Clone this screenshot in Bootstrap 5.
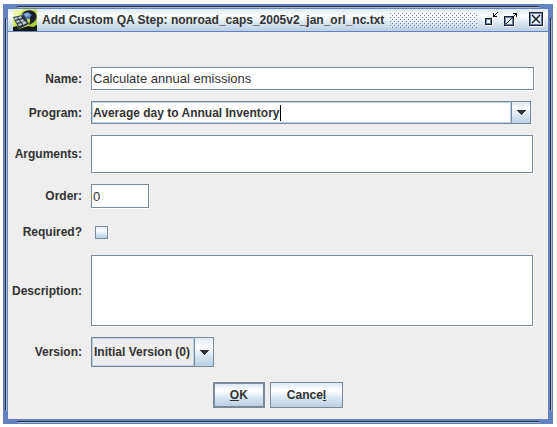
<!DOCTYPE html>
<html lang="en">
<head>
<meta charset="utf-8">
<meta name="viewport" content="width=device-width, initial-scale=1">
<title>Add Custom QA Step</title>
<link href="https://cdn.jsdelivr.net/npm/bootstrap@5.3.0/dist/css/bootstrap.min.css" rel="stylesheet">
<style>
:root{--edge:#7a8a99;--steel:#6382bf;--pale:#b8cfe5;--ink:#333;--sheen:linear-gradient(#dde8f3,#fff 30%,#dde8f3 60%,#b8cfe5)}
body{font:bold 12px/16px "Liberation Sans",Arial,sans-serif;color:var(--ink);background:#fff;padding:4px 4px 3px 3px}
.frame{
  padding:5px;
  background:
    linear-gradient(var(--ink),var(--ink)) 14px 2px/calc(100% - 28px) 1px no-repeat,
    linear-gradient(#a3b8d8,#a3b8d8) 15px 3px/calc(100% - 28px) 1px no-repeat,
    linear-gradient(var(--ink),var(--ink)) 14px calc(100% - 2px)/calc(100% - 28px) 1px no-repeat,
    linear-gradient(#a3b8d8,#a3b8d8) 15px calc(100% - 1px)/calc(100% - 28px) 1px no-repeat,
    linear-gradient(var(--ink),var(--ink)) 2px 14px/1px calc(100% - 28px) no-repeat,
    linear-gradient(#a3b8d8,#a3b8d8) 3px 15px/1px calc(100% - 28px) no-repeat,
    linear-gradient(var(--ink),var(--ink)) calc(100% - 2px) 14px/1px calc(100% - 28px) no-repeat,
    linear-gradient(#a3b8d8,#a3b8d8) calc(100% - 1px) 15px/1px calc(100% - 28px) no-repeat,
    var(--steel)}
.titlebar{height:23px;padding:0 4px 0 5px;border-bottom:1px solid var(--steel);background:var(--sheen)}
.titlebar h1{font-size:12px;line-height:22px;font-weight:bold;margin-left:5px}
.grip{height:16px;margin:0 7px 0 5px;background:url("data:image/svg+xml,%3Csvg xmlns='http://www.w3.org/2000/svg' width='4' height='4' shape-rendering='crispEdges'%3E%3Cpath fill='%23fff' d='M0 0h1v1H0zM2 2h1v1H2z'/%3E%3Cpath fill='%236382bf' d='M1 1h1v1H1zM3 3h1v1H3z'/%3E%3C/svg%3E")}
.tool{border:0;background:none;padding:0;line-height:0}
.tool-max{margin:0 11px 0 5px}
.panel{background:#eee;padding:35px 14px 11px 5px}
.fields{display:grid;grid-template-columns:69px minmax(0,1fr);column-gap:9px;row-gap:11px;align-items:center}
.fields label{text-align:right;white-space:nowrap;justify-self:end}
.box{display:block;font:13px/16px "Liberation Sans",Arial,sans-serif;color:var(--ink);background:#fff;border:1px solid var(--edge);border-radius:0;padding:0 1px;height:23px;width:100%;box-shadow:1px 1px #fff}
.box:focus,.entry input:focus{outline:0}
.args,.desc{resize:none;width:calc(100% - 1px)}
.args{height:38px}
.desc{height:71px}
.order{width:58px;height:24px}
.combo{height:23px;width:calc(100% - 3px);border:1px solid var(--edge);background:#fff}
.entry{border:1px solid var(--pale);min-width:0}
.entry input{font:inherit;color:inherit;border:0;padding:0;width:187px;min-width:0}
.caret{width:1px;height:16px;background:#000}
.drop{width:19px;padding:0;border:0;border-left:1px solid var(--edge);line-height:0;background:var(--sheen)}
.check-line{height:25px;padding:2px 0 0 4px}
.tick{appearance:none;width:13px;height:13px;margin:0;border:1px solid var(--edge);background:var(--sheen)}
.version{appearance:none;font:inherit;color:inherit;width:123px;height:30px;border:1px solid var(--edge);border-radius:0;padding:0 0 0 2px;
  background:
   url("data:image/svg+xml,%3Csvg xmlns='http://www.w3.org/2000/svg' width='10' height='5' shape-rendering='crispEdges'%3E%3Cpath fill='%23333' d='M0 0h10L5 5z'/%3E%3C/svg%3E") right 4px center no-repeat,
   linear-gradient(var(--edge),var(--edge)) right 18px top/1px 100% no-repeat,
   var(--sheen) right/18px 100% no-repeat,
   linear-gradient(#eee,#eee) 1px 1px/calc(100% - 21px) calc(100% - 2px) no-repeat,
   var(--pale)}
.actions{padding:15px 0 0 9px;gap:5px}
.push{font:inherit;color:inherit;height:26px;border:1px solid var(--edge);border-radius:0;padding:0 16px;background:var(--sheen)}
.push.main{border-width:2px;padding:0 15px}
</style>
</head>
<body>
<main class="frame">
  <header class="titlebar d-flex align-items-center">
    <svg class="flex-shrink-0" width="24" height="22" viewBox="0 0 24 22" aria-hidden="true">
      <path fill="#cfe566" d="M0 0h24v22H0z"/>
      <path fill="#eef5b0" d="M0 0h10L5 7 0 9z"/>
      <path fill="#a9cf3c" d="M15 13l9-8v12l-7 1z"/>
      <path fill="#141a10" d="M0 18l4-1 2 3 9-3 5 1 4-2v6H0z"/>
      <path fill="#1b2024" d="M9 5c3-5 12-5 14 0 2 5-2 9-7 11 1-3 2-5 0-7z"/>
      <path fill="#4f79b8" d="M9 5l6-2 4 3-3 4-5 1-3-3z"/>
      <path fill="#8fb1dc" d="M11 5l4-1 2 2-4 2z"/>
      <path fill="#2b343b" d="M0 8l11-2 5 9-10 5z"/>
      <path fill="#b9c7d4" d="M1 9l3-1 1 2-3 1zM5 8l3-1 1 2-3 1zM3 12l3-1 1 2-3 1zM7 11l3-1 1 2-3 1zM5 15l3-1 1 2-3 1zM9 13l3-1 2 2-4 2z"/>
    </svg>
    <h1 class="mb-0 text-nowrap" id="title">Add Custom QA Step: nonroad_caps_2005v2_jan_orl_nc.txt</h1>
    <div class="grip flex-grow-1"></div>
    <button class="tool" type="button" aria-label="Minimize"><svg width="14" height="16" shape-rendering="crispEdges"><path fill="#fff" d="M1 7h7v7H1z"/><path fill="#222" d="M0 6h7v7H0z"/><path fill="#6382bf" d="M1 7h5v5H1z"/><path fill="#fff" d="M2 8h3v3H2z"/><path fill="#111" d="M8 1h1v3h3v1H8zM9 3h1v1H9zM10 2h1v1h-1zM11 1h1v1h-1zM12 0h1v1h-1z"/></svg></button>
    <button class="tool tool-max" type="button" aria-label="Maximize"><svg width="14" height="16" shape-rendering="crispEdges"><path fill="#fff" d="M1 5h10v10H1z"/><path fill="#222" d="M0 4h10v10H0z"/><path fill="#6382bf" d="M1 5h8v8H1z"/><path fill="#e6eef7" d="M2 6h6v6H2z"/><path fill="#111" d="M2 11h1v1H2zM3 10h1v1H3zM4 9h1v1H4zM5 8h1v1H5zM6 7h1v1H6zM7 6h1v1H7zM8 5h1v1H8zM9 4h1v1H9zM10 3h1v1h-1zM11 2h1v1h-1zM9 1h4v4h-1V2H9z"/></svg></button>
    <button class="tool" type="button" aria-label="Close"><svg width="15" height="16" shape-rendering="crispEdges"><path fill="#fff" d="M1 1h14v14H1z"/><path fill="#222" d="M0 0h14v14H0z"/><path fill="#6382bf" d="M1 1h12v12H1z"/><path fill="#e6eef7" d="M2 2h10v10H2z"/><path fill="none" stroke="#111" shape-rendering="auto" stroke-width="1.400" d="M3 3l8 8M11 3l-8 8"/></svg></button>
  </header>
  <form class="panel" aria-labelledby="title">
    <div class="fields">
      <label for="name">Name:</label>
      <input class="box" id="name" type="text" value="Calculate annual emissions">
      <label for="program">Program:</label>
      <div class="combo d-flex">
        <div class="entry d-flex flex-grow-1 align-items-center">
          <input id="program" type="text" value="Average day to Annual Inventory">
          <span class="caret"></span>
        </div>
        <button class="drop" type="button" aria-label="Show programs"><svg width="10" height="5" shape-rendering="crispEdges"><path fill="#333" d="M0 0h10L5 5z"/></svg></button>
      </div>
      <label for="args">Arguments:</label>
      <textarea class="box args" id="args"></textarea>
      <label for="order">Order:</label>
      <input class="box order" id="order" type="text" value="0">
      <label for="required">Required?</label>
      <div class="check-line d-flex align-items-center"><input class="tick" id="required" type="checkbox"></div>
      <label for="desc">Description:</label>
      <textarea class="box desc" id="desc"></textarea>
      <label for="version">Version:</label>
      <select class="version" id="version"><option>Initial Version (0)</option></select>
    </div>
    <div class="actions d-flex justify-content-center">
      <button class="push main" type="submit"><u>O</u>K</button>
      <button class="push" type="button">Cance<u>l</u></button>
    </div>
  </form>
</main>
<script src="https://cdn.jsdelivr.net/npm/bootstrap@5.3.0/dist/js/bootstrap.bundle.min.js"></script>
</body>
</html>
